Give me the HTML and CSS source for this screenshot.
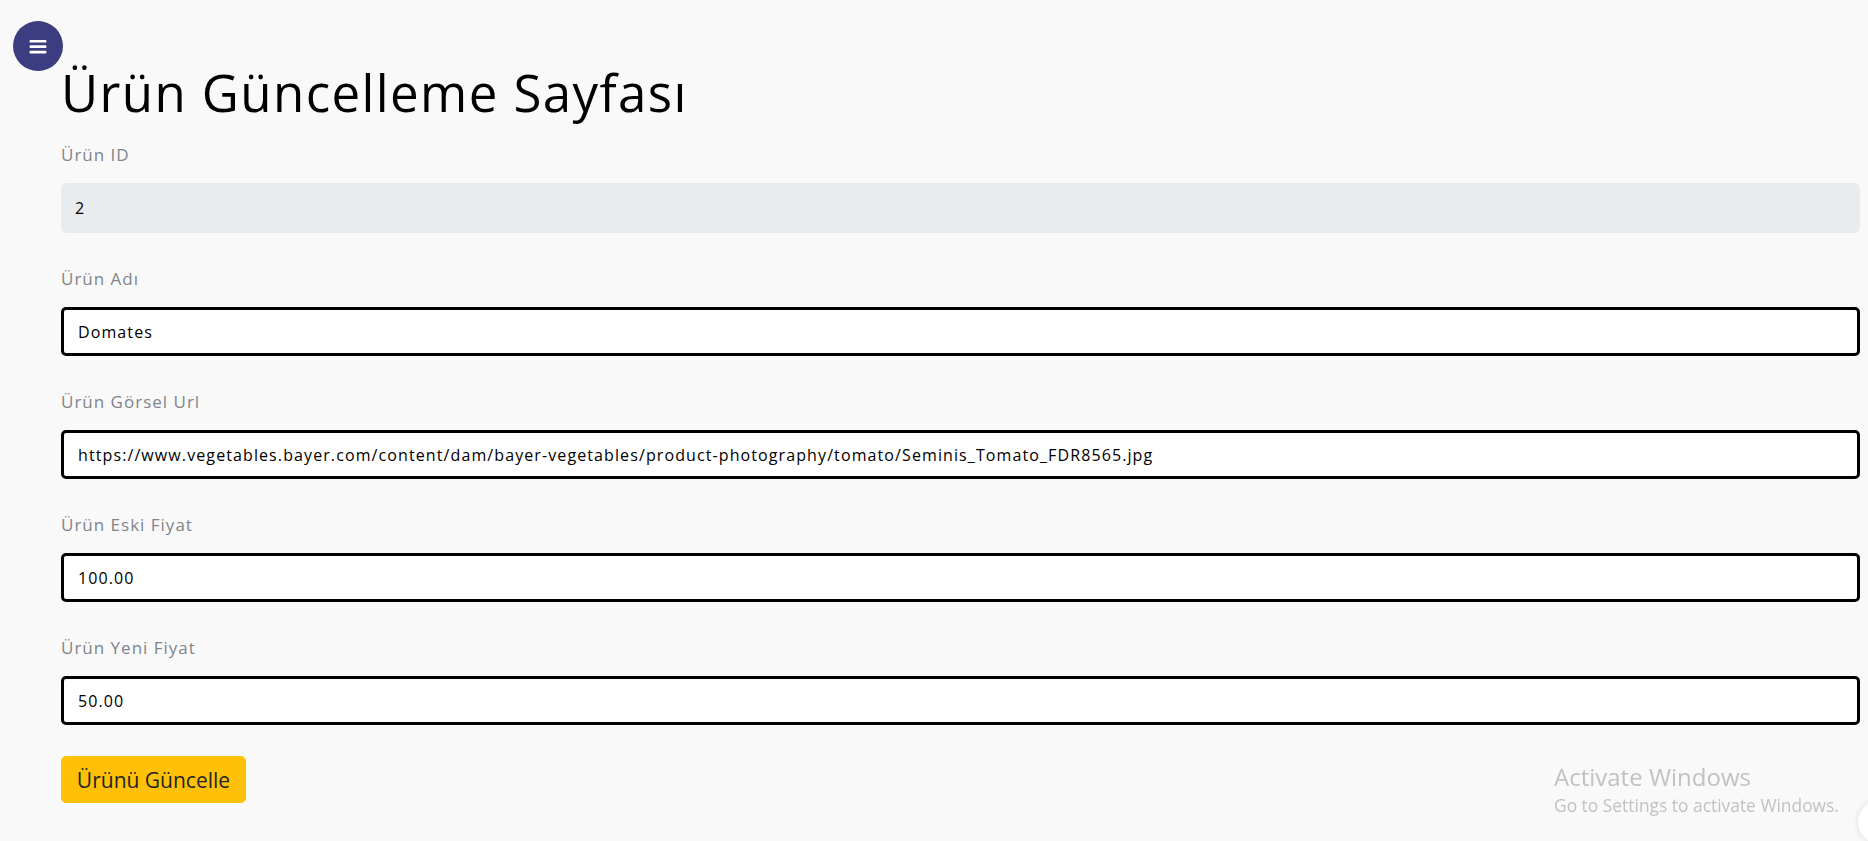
FILE: index.html
```html
<!DOCTYPE html>
<html lang="tr">
<head>
<meta charset="utf-8">
<title>Ürün Güncelleme Sayfası</title>
<link rel="stylesheet" href="styles.css">
</head>
<body>
<button class="menu-toggle" type="button" aria-label="Menü">
  <svg width="18" height="16" viewBox="0 0 18 16" aria-hidden="true">
    <rect x="0.5" y="2" width="17" height="2.6" rx="1.2" fill="#fff"/>
    <rect x="0.5" y="7.3" width="17" height="2.6" rx="1.2" fill="#fff"/>
    <rect x="0.5" y="12.8" width="17" height="2.6" rx="1.2" fill="#fff"/>
  </svg>
</button>
<main class="content">
  <h1 class="page-title">Ürün Güncelleme Sayfası</h1>
  <form class="product-form">
    <div class="form-group">
      <label class="form-label">Ürün ID</label>
      <input class="form-input form-input-readonly" type="text" value="2" readonly>
    </div>
    <div class="form-group">
      <label class="form-label">Ürün Adı</label>
      <input class="form-input" type="text" value="Domates">
    </div>
    <div class="form-group">
      <label class="form-label">Ürün Görsel Url</label>
      <input class="form-input" type="text" value="https://www.vegetables.bayer.com/content/dam/bayer-vegetables/product-photography/tomato/Seminis_Tomato_FDR8565.jpg">
    </div>
    <div class="form-group">
      <label class="form-label">Ürün Eski Fiyat</label>
      <input class="form-input" type="text" value="100.00">
    </div>
    <div class="form-group form-group-last">
      <label class="form-label">Ürün Yeni Fiyat</label>
      <input class="form-input" type="text" value="50.00">
    </div>
    <button class="btn-update" type="button">Ürünü Güncelle</button>
  </form>
</main>
<div class="activate-watermark">
  <div class="activate-title">Activate Windows</div>
  <div class="activate-sub">Go to Settings to activate Windows.</div>
</div>
<div class="scroll-top"></div>
</body>
</html>
```
FILE: styles.css
```css
html, body {
  margin: 0;
  padding: 0;
}
body {
  background: #f9f9f9;
  font-family: "Open Sans", "Noto Sans", sans-serif;
  color: #000;
  min-height: 841px;
  overflow: hidden;
}
.menu-toggle {
  position: absolute;
  top: 21px;
  left: 13px;
  width: 50px;
  height: 50px;
  border-radius: 50%;
  border: none;
  background: #3c3c80;
  display: flex;
  align-items: center;
  justify-content: center;
  padding: 0;
  z-index: 5;
}
.menu-toggle svg {
  display: block;
}
.content {
  padding: 0 8px 0 61px;
}
.page-title {
  margin: 0 0 21px 0;
  padding-top: 62px;
  font-size: 51px;
  font-weight: 400;
  line-height: 60px;
  letter-spacing: 1.4px;
}
.product-form {
  display: flex;
  flex-direction: column;
}
.form-group {
  display: flex;
  flex-direction: column;
  margin-bottom: 34px;
}
.form-group-last {
  margin-bottom: 31px;
}
.form-label {
  font-size: 17px;
  line-height: 24px;
  letter-spacing: 1px;
  color: #80858b;
  margin-bottom: 16px;
}
.form-input {
  box-sizing: border-box;
  height: 49px;
  width: 100%;
  border: 3px solid #000;
  border-radius: 5px;
  background: #fff;
  padding: 0 14px;
  font-family: "Open Sans", "Noto Sans", sans-serif;
  font-size: 16px;
  letter-spacing: 1.1px;
  color: #000;
  outline: none;
}
.form-input-readonly {
  background: #e9ecef;
  border: 1px solid #e9ecef;
  padding: 0 13px;
  height: 50px;
}
.btn-update {
  align-self: flex-start;
  box-sizing: border-box;
  height: 47px;
  width: 185px;
  background: #ffc107;
  border: 1px solid #ffc107;
  border-radius: 5px;
  font-family: "Open Sans", "Noto Sans", sans-serif;
  font-size: 21px;
  color: #212529;
  padding: 0 12px;
}
.activate-watermark {
  position: fixed;
  left: 1554px;
  top: 761px;
  color: #c2c2c2;
  font-family: "Open Sans", "Noto Sans", sans-serif;
  pointer-events: none;
}
.activate-title {
  font-size: 24px;
  line-height: 32px;
}
.activate-sub {
  font-size: 17.4px;
  line-height: 24px;
}
.scroll-top {
  position: fixed;
  left: 1858px;
  top: 800px;
  width: 44px;
  height: 44px;
  border-radius: 50%;
  background: #fff;
  box-shadow: 0 0 6px rgba(0,0,0,0.12);
}
```
